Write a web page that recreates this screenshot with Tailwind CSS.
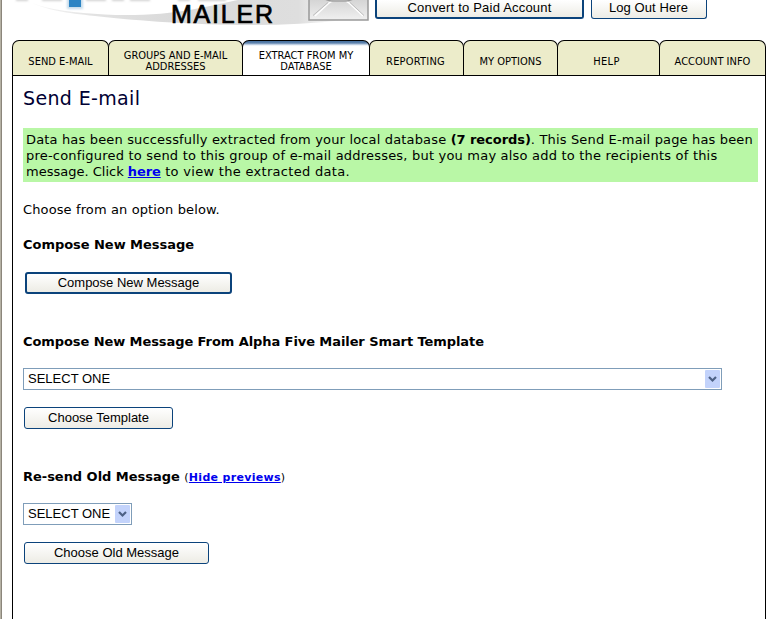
<!DOCTYPE html>
<html lang="en">
<head>
<meta charset="utf-8">
<title>Alpha Five Mailer</title>
<script src="https://cdn.jsdelivr.net/npm/@tailwindcss/browser@4"></script>
</head>
<body class="w-[779px] h-[619px] overflow-hidden bg-white text-black font-['DejaVu_Sans',sans-serif] text-[13px] leading-4">
<div class="flex h-full">
  <div class="w-[2px] shrink-0 bg-[#8b867b] border-l border-[#b5b1a4]"></div>
  <div class="ml-[10px] flex w-[754px] shrink-0 flex-col">
    <header class="flex h-[40px] shrink-0">
      <svg class="block shrink-0" width="358" height="40" viewBox="12 0 358 40">
        <defs>
          <linearGradient id="sw" gradientUnits="userSpaceOnUse" x1="32" x2="345" y1="0" y2="0"><stop offset="0" stop-color="#f8f8f8"/><stop offset=".2" stop-color="#e2e2e2"/><stop offset=".45" stop-color="#dadada"/><stop offset=".85" stop-color="#dedede"/><stop offset="1" stop-color="#fff"/></linearGradient>
          <linearGradient id="env" x1="0" x2="0" y1="0" y2="1"><stop offset="0" stop-color="#d2d2d2"/><stop offset="1" stop-color="#f0f0f0"/></linearGradient>
          <filter id="soft" x="-10%" y="-200%" width="120%" height="500%"><feGaussianBlur stdDeviation="1.300"/></filter>
        </defs>
        <path d="M32 3C50 10 75 13 105 14.500C130 16 165 15 195 9C215 5 228 2 238 0H310V20H345C310 24 275 25.500 240 25C180 24 130 20 95 16C65 13 48 10 32 3Z" fill="url(#sw)"/>
        <path d="M16 -2H28V1H16ZM42 -2H62V1H42ZM86 -2H106V1H86ZM112 -2H124V1H112ZM130 -2H150V1H130ZM178 -2H190V1H178ZM198 -2H226V1H198Z" fill="#d0d0d0" filter="url(#soft)"/>
        <rect x="67" y="-2" width="16" height="11" fill="#c6dceb" filter="url(#soft)"/>
        <rect x="69" y="0" width="12" height="7" fill="#2c84c4"/>
        <path d="M309 -2V20H368V-2Z" fill="url(#env)" stroke="#999" stroke-width="1.500"/>
        <path d="M315 16L329 3Q331 1 335 1H344Q347 1 349 3L363 16" fill="none" stroke="#fff" stroke-width="1.500"/>
        <path d="M313 15.500L328 2.500M364 15.500L350 2.500" fill="none" stroke="#bcbcbc"/>
        <path d="M325 -1Q329 1 332 1H346Q349 1 353 -1" fill="none" stroke="#999" stroke-width="1.500"/>
        <text x="171" y="23" font-family="Liberation Sans, sans-serif" font-size="25" stroke="#000" stroke-width=".7" textLength="102">MAILER</text>
      </svg>
      <div class="ml-[5px] flex h-[19px] w-[209px] items-end justify-center rounded-b-[3px] border-2 border-t-0 border-[#0b437b] bg-gradient-to-b from-white to-[#edece5] pb-px font-['Liberation_Sans',sans-serif] text-[13px] leading-[16px] tracking-[0.2px]">Convert to Paid Account</div>
      <div class="ml-[7px] flex h-[19px] w-[116px] items-end justify-center rounded-b-[3px] border border-t-0 border-[#0b437b] bg-gradient-to-b from-white to-[#edece5] pb-[2px] pr-px font-['Liberation_Sans',sans-serif] text-[13px] leading-[16px] tracking-[0.1px]">Log Out Here</div>
    </header>
    <nav class="flex h-[36px] shrink-0 border-b border-black text-center font-['DejaVu_Sans_Condensed','DejaVu_Sans',sans-serif] text-[11px] leading-[11px] tracking-[0px] [&>div]:flex [&>div]:items-center [&>div]:justify-center [&>div]:whitespace-nowrap [&>div]:rounded-t-[7px] [&>div]:border [&>div]:border-b-0 [&>div]:border-black [&>div]:pt-[6px]">
      <div class="w-[97px] bg-[#ececca]">SEND E-MAIL</div>
      <div class="-ml-px w-[135px] bg-[#ececca]">GROUPS AND E-MAIL<br>ADDRESSES</div>
      <div class="-ml-px w-[128px] bg-[linear-gradient(#46719f_0,#5d82ad_2px,#dce6f2_4px,#fff_5px)]">EXTRACT FROM MY<br>DATABASE</div>
      <div class="-ml-px w-[95px] bg-[#ececca] pr-[2px] tracking-[0.2px]">REPORTING</div>
      <div class="-ml-px w-[95px] bg-[#ececca]">MY OPTIONS</div>
      <div class="-ml-px w-[103px] bg-[#ececca] pr-[4px] tracking-[0.3px]">HELP</div>
      <div class="-ml-px w-[107px] bg-[#ececca]">ACCOUNT INFO</div>
    </nav>
    <main class="flex-1 border-x border-black pl-[10px] pr-[7px]">
      <h1 class="mt-[10px] h-[24px] text-[19px] leading-[24px] tracking-[0.35px] text-[#000033]">Send E-mail</h1>
      <div class="mt-[18px] h-[54px] whitespace-nowrap bg-[#b9f7a6] pl-[3px] pt-[4px] tracking-[0.2px]">
        <p class="tracking-[0.16px]">Data has been successfully extracted from your local database <b class="tracking-[-0.05px]">(7 records)</b>. This Send E-mail page has been</p>
        <p>pre-configured to send to this group of e-mail addresses, but you may also add to the recipients of this</p>
        <p><span class="tracking-[0px]">message. Click </span><a class="font-bold tracking-[-0.1px] text-[#0000ee] underline">here</a><span class="tracking-[0.3px]"> to view the extracted data.</span></p>
      </div>
      <p class="mt-[20px] tracking-[0.12px]">Choose from an option below.</p>
      <h2 class="mt-[19px] font-bold tracking-[-0.04px]">Compose New Message</h2>
      <button class="ml-[2px] mt-[19px] block h-[22px] w-[207px] rounded-[3px] border-2 border-[#0b437b] bg-gradient-to-b from-white to-[#edece5] font-['Liberation_Sans',sans-serif] leading-4">Compose New Message</button>
      <h2 class="mt-[40px] font-bold tracking-[-0.08px]">Compose New Message From Alpha Five Mailer Smart Template</h2>
      <div class="mt-[18px] flex h-[22px] w-[699px] items-center justify-between border border-[#7f9db9] pl-[4px] pr-px font-['Liberation_Sans',sans-serif]"><span>SELECT ONE</span>
        <svg width="15" height="18" viewBox="0 0 15 18"><rect width="15" height="18" rx="1" fill="#c3d3fb"/><path d="M4 7l3.500 3.500L11 7" fill="none" stroke="#4d6185" stroke-width="2.200"/></svg></div>
      <button class="ml-px mt-[17px] block h-[22px] w-[149px] rounded-[3px] border border-[#0b437b] bg-gradient-to-b from-white to-[#edece5] font-['Liberation_Sans',sans-serif] leading-4">Choose Template</button>
      <h2 class="mt-[40px] font-bold tracking-[-0.03px]">Re-send Old Message <span class="text-[11px] font-normal tracking-[0.3px]">(<a class="font-bold text-[#0000ee] underline">Hide previews</a>)</span></h2>
      <div class="mt-[17px] flex h-[22px] w-[109px] items-center justify-between border border-[#7f9db9] pl-[4px] pr-px font-['Liberation_Sans',sans-serif]"><span>SELECT ONE</span>
        <svg width="15" height="18" viewBox="0 0 15 18"><rect width="15" height="18" rx="1" fill="#c3d3fb"/><path d="M4 7l3.500 3.500L11 7" fill="none" stroke="#4d6185" stroke-width="2.200"/></svg></div>
      <button class="ml-px mt-[17px] block h-[22px] w-[185px] rounded-[3px] border border-[#0b437b] bg-gradient-to-b from-white to-[#edece5] font-['Liberation_Sans',sans-serif] leading-4">Choose Old Message</button>
    </main>
  </div>
</div>
</body>
</html>
